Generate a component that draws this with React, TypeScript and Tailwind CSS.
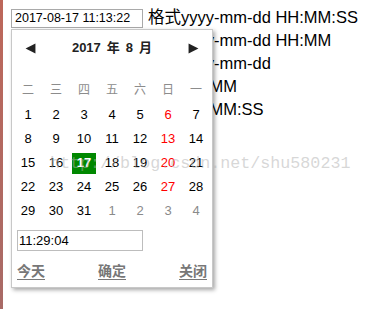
const weekdays = ["二", "三", "四", "五", "六", "日", "一"];

type Day = { n: number; kind: "cur" | "sun" | "next" | "sel" };

const days: Day[] = [];
for (let i = 1; i <= 31; i++) {
    days.push({ n: i, kind: i === 17 ? "sel" : (i - 6) % 7 === 0 ? "sun" : "cur" });
}
for (let i = 1; i <= 4; i++) days.push({ n: i, kind: "next" });

const formats = [
    "格式yyyy-mm-dd HH:MM:SS",
    "格式yyyy-mm-dd HH:MM",
    "格式yyyy-mm-dd",
    "格式HH:MM",
    "格式HH:MM:SS",
];

const cjk = "font-['Liberation_Sans','Noto_Sans_CJK_SC',sans-serif]";

const dayColor = {
    cur: "text-black",
    sun: "text-[#ff0000]",
    next: "text-[#8a8a8a]",
    sel: "text-white font-bold",
};

const App = () => {
    return (
        <div className={`relative w-[384px] h-[309px] flex bg-white overflow-hidden ${cjk}`}>
            <div className="w-[3px] h-full bg-gradient-to-b from-[#bd675a] to-[#a86a66]" />
            <div className="flex items-start pl-[8px] pt-[6px]">
                <div className="mt-[3px] w-[132px] h-[19px] border border-[#a9a9a9] flex items-center pl-[3px] text-[12.5px] text-black">
                    2017-08-17 11:13:22
                </div>
                <div className="ml-[5px] flex flex-col text-[16.5px] leading-[23px] text-black">
                    {formats.map((f) => (
                        <div key={f}>{f}</div>
                    ))}
                </div>
            </div>

            {/* date picker popup */}
            <div className="absolute left-[11px] top-[29px] w-[202px] h-[259px] bg-white border border-[#c8c8c8] shadow-[2px_2px_4px_rgba(0,0,0,0.35)] flex flex-col">
                <div className="h-[24px] mt-[6px] px-[13px] flex items-center justify-between">
                    <svg width="11" height="11" viewBox="0 0 10 10">
                        <path d="M0.5 5 L9.5 0.5 L9.5 9.5 Z" fill="#222" />
                    </svg>
                    <div className="text-[13px] font-bold text-[#222] flex items-center gap-[6px]">
                        <span>2017</span>
                        <span>年</span>
                        <span>8</span>
                        <span>月</span>
                    </div>
                    <svg width="11" height="11" viewBox="0 0 10 10">
                        <path d="M9.5 5 L0.5 0.5 L0.5 9.5 Z" fill="#222" />
                    </svg>
                </div>
                <div className="mt-[18px] px-[2px] grid grid-cols-7">
                    {weekdays.map((w) => (
                        <div key={w} className="h-[24px] flex items-center justify-center text-[12px] text-[#8c8c8c]">
                            {w}
                        </div>
                    ))}
                    {days.map((d, i) => (
                        <div key={i} className="h-[24px] flex items-center justify-center">
                            <span
                                className={`h-[21px] w-[24px] mt-[2px] flex items-center justify-center text-[13px] ${dayColor[d.kind]} ${d.kind === "sel" ? "bg-[#008800]" : ""}`}
                            >
                                {d.n}
                            </span>
                        </div>
                    ))}
                </div>
                <div className="mt-[8px] ml-[5px] w-[126px] h-[21px] border border-[#bdbdbd] flex items-center pl-[1px] text-[13px] text-black">
                    11:29:04
                </div>
                <div className="mt-[10px] px-[5px] flex justify-between text-[14px] font-bold text-[#777] underline underline-offset-[3px]">
                    <span>今天</span>
                    <span>确定</span>
                    <span>关闭</span>
                </div>
            </div>

            {/* blog watermark */}
            <div className="absolute left-[50px] top-[151px] pointer-events-none font-['Liberation_Mono',monospace] text-[16.7px] text-[rgba(175,175,175,0.5)]">
                http://blog.csdn.net/shu580231
            </div>
        </div>
    );
};

export default App;
